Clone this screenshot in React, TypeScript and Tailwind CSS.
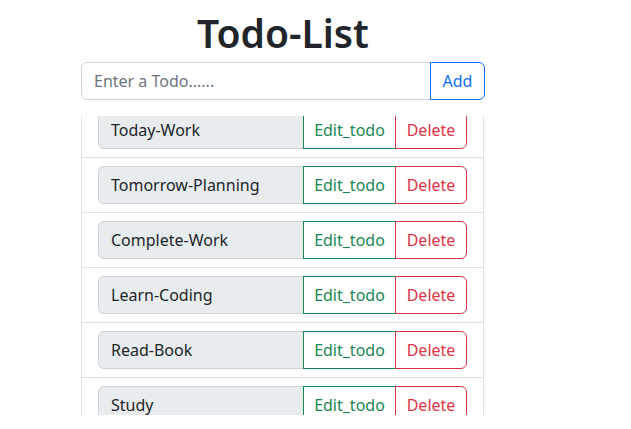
import React from "react";

const todos = [
  "Today-Work",
  "Tomorrow-Planning",
  "Complete-Work",
  "Learn-Coding",
  "Read-Book",
  "Study",
];

export default function App() {
  return (
    <div
      className="min-h-screen bg-white text-[#212529] pl-[81px]"
      style={{ fontFamily: '"Segoe UI", "Noto Sans", "Open Sans", sans-serif' }}
    >
      <div className="w-[404px]">
        <h1 className="text-center text-[39px] font-semibold leading-[52px] pt-[7px] text-[#212529]">
          Todo-List
        </h1>
        <div className="mt-[3px] flex h-[38px]">
          <input
            className="flex-1 min-w-0 rounded-l-[6px] border border-[#ced4da] px-3 text-[16px] text-[#212529] placeholder:text-[#6c757d] outline-none"
            placeholder="Enter a Todo......"
          />
          <button className="-ml-px w-[55px] rounded-r-[6px] border border-[#0d6efd] text-[16px] text-[#0d6efd]">
            Add
          </button>
        </div>
        <div className="mt-4 h-[299px] w-[403px] overflow-hidden">
          <ul className="-mt-[14px]">
            {todos.map((t, i) => (
              <li
                key={t}
                className={`border border-[#dee2e6] px-4 py-2 ${i === 0 ? "" : "border-t-0"}`}
              >
                <div className="flex h-[38px] text-[16px]">
                  <span className="flex flex-1 items-center rounded-l-[6px] border border-[#ced4da] bg-[#e9ecef] px-3 text-[#212529]">
                    {t}
                  </span>
                  <button className="-ml-px w-[93px] border border-[#198754] text-[#198754]">
                    Edit_todo
                  </button>
                  <button className="-ml-px w-[72px] rounded-r-[6px] border border-[#dc3545] text-[#dc3545]">
                    Delete
                  </button>
                </div>
              </li>
            ))}
          </ul>
        </div>
      </div>
    </div>
  );
}
